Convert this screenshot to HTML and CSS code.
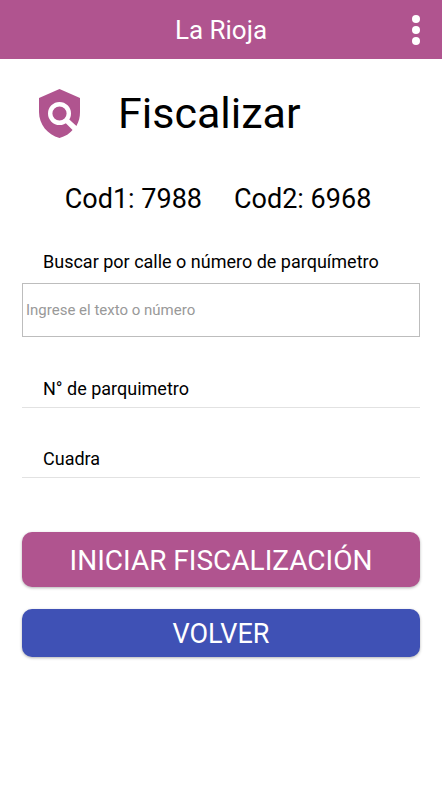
FILE: index.html
```html
<!DOCTYPE html>
<html lang="es">
<head>
  <meta charset="UTF-8" />
  <meta name="viewport" content="width=device-width, initial-scale=1.0"/>
  <title>La Rioja - Fiscalizar</title>
  <link rel="stylesheet" href="styles.css">
</head>
<body>
  <header class="toolbar">
    <div class="toolbar-title">La Rioja</div>
    <button class="menu" type="button" aria-label="Menú">
      <svg viewBox="0 0 8 30" width="8" height="30" fill="currentColor">
        <circle cx="4" cy="4" r="4"/>
        <circle cx="4" cy="15" r="4"/>
        <circle cx="4" cy="26" r="4"/>
      </svg>
    </button>
  </header>

  <main class="content">
    <div class="heading">
      <svg class="shield" viewBox="0 0 41 49" width="41" height="49" aria-hidden="true">
        <path fill="currentColor" d="M20.500 0 41 9v14c0 5-1 9.500-3.600 14L28 28.500l-2 2 8.500 9.500C31 44.500 26 47.500 20.500 49 8.500 46 0 35 0 23V9z"/>
        <circle cx="20.500" cy="24.500" r="9.300" fill="none" stroke="#fff" stroke-width="4.400"/>
        <path d="M26.500 30.500 37 41" fill="none" stroke="#fff" stroke-width="4.800"/>
      </svg>
      <h1>Fiscalizar</h1>
    </div>

    <div class="codes">
      <span>Cod1: 7988</span>
      <span>Cod2: 6968</span>
    </div>

    <form>
      <label class="search-label" for="search">Buscar por calle o número de parquímetro</label>
      <input class="search" id="search" type="text" placeholder="Ingrese el texto o número">

      <ul class="details">
        <li>N° de parquimetro</li>
        <li>Cuadra</li>
      </ul>

      <button class="btn btn-start" type="submit">INICIAR FISCALIZACIÓN</button>
      <button class="btn btn-back" type="button">VOLVER</button>
    </form>
  </main>
</body>
</html>
```
FILE: styles.css
```css
:root {
  --primary: #b0548f;
  --secondary: #3f51b5;
  --line: #e2e2e2;
}

* {
  box-sizing: border-box;
  margin: 0;
  padding: 0;
}

body {
  font-family: Roboto, sans-serif;
  background: #fff;
  color: #000;
}

.toolbar {
  display: grid;
  grid-template-columns: 48px 1fr 48px;
  align-items: center;
  height: 59px;
  padding: 0 2px;
  background: var(--primary);
  color: #fff;
}

.toolbar-title {
  grid-column: 2;
  font-size: 26px;
  text-align: center;
}

.menu {
  display: flex;
  align-items: center;
  justify-content: center;
  height: 48px;
  border: none;
  background: none;
  color: inherit;
  cursor: pointer;
}

.content {
  padding: 28px 22px;
}

.heading {
  display: flex;
  align-items: center;
  gap: 38px;
  padding-left: 17px;
}

.shield {
  color: var(--primary);
}

h1 {
  font-size: 43px;
  font-weight: 400;
  line-height: 53px;
}

.codes {
  display: flex;
  justify-content: center;
  gap: 32px;
  margin-top: 41px;
  padding-right: 6px;
  font-size: 27px;
  line-height: 36px;
}

.search-label {
  display: block;
  margin-top: 32px;
  padding: 0 21px;
  font-size: 18px;
  line-height: 26px;
}

.search {
  display: block;
  width: 100%;
  height: 54px;
  margin-top: 8px;
  padding: 0 3px;
  border: 1px solid #bdbdbd;
  font-family: inherit;
  font-size: 15px;
}

.search::placeholder {
  color: #999;
}

.details {
  padding-top: 1px;
  list-style: none;
}

.details li {
  padding: 38px 21px 5px;
  border-bottom: 1px solid var(--line);
  font-size: 18px;
  line-height: 26px;
}

.btn {
  display: block;
  width: 100%;
  padding-top: 2px;
  border: none;
  border-radius: 10px;
  box-shadow: 0 1px 3px rgba(0, 0, 0, 0.3);
  color: #fff;
  font-family: inherit;
  font-size: 27px;
  cursor: pointer;
}

.btn-start {
  height: 55px;
  margin-top: 54px;
  background: var(--primary);
  font-size: 28px;
}

.btn-back {
  height: 48px;
  margin-top: 22px;
  background: var(--secondary);
}
```
